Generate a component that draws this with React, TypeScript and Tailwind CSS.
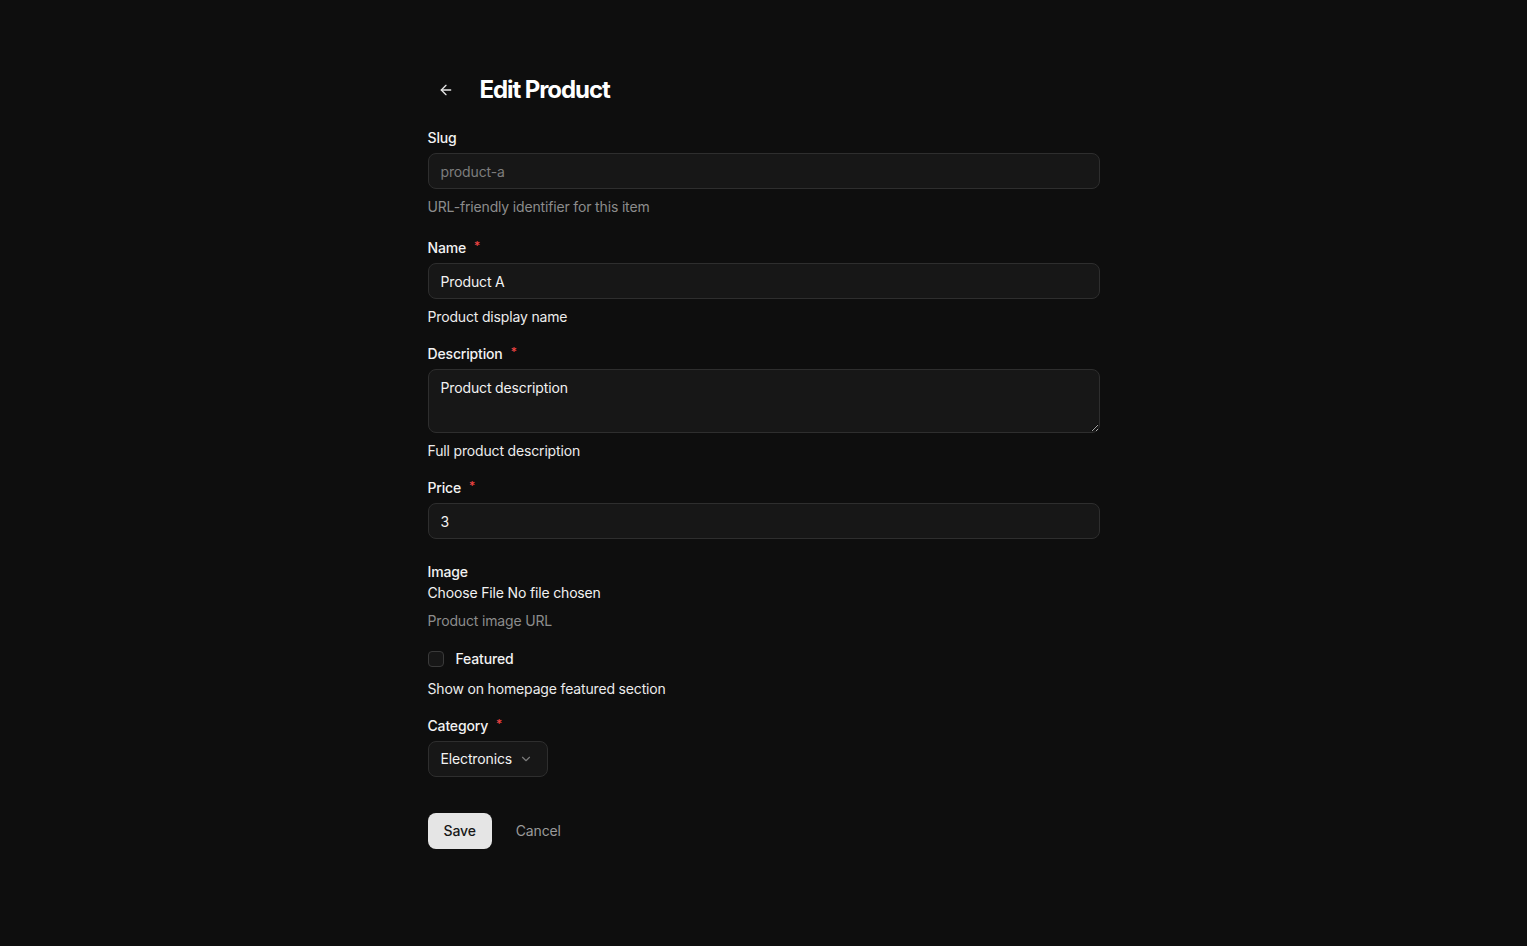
import { ArrowLeft, ChevronDown } from 'lucide-react';

function Label({ text, required }: { text: string; required?: boolean }) {
  return (
    <div className="flex h-5 items-center text-sm font-medium leading-5 text-[#f2f2f2]">
      <span>{text}</span>
      {required && <span className="ml-2 -mt-1 text-xs text-[#ef4444]">*</span>}
    </div>
  );
}

const inputClass =
  'h-9 w-full rounded-lg border border-[#2e2e2e] bg-[#171717] px-3 text-sm tracking-[-0.01em] outline-none';

export default function App() {
  return (
    <div
      className="min-h-[946px] bg-[#0e0e0e] text-[#f2f2f2] tracking-[-0.01em]"
      style={{ fontFamily: 'Inter, "Noto Sans", sans-serif' }}
    >
      <div className="mx-auto flex max-w-2xl flex-col pt-[72px] pb-24">
        <div className="flex h-9 items-center gap-4">
          <button className="flex h-9 w-9 items-center justify-center rounded-md text-[#e5e5e5]">
            <ArrowLeft size={16} strokeWidth={2} />
          </button>
          <h1 className="text-2xl font-bold tracking-[-0.045em] text-white">Edit Product</h1>
        </div>

        <div className="mt-5">
          <Label text="Slug" />
        </div>
        <input className={`${inputClass} mt-[5px] text-[#7d7d7d]`} value="product-a" disabled readOnly />
        <p className="mt-2 text-sm leading-5 text-[#8c8c8c]">URL-friendly identifier for this item</p>

        <div className="mt-[21px]">
          <Label text="Name" required />
        </div>
        <input className={`${inputClass} mt-[5px] text-[#f2f2f2]`} defaultValue="Product A" />
        <p className="mt-2 text-sm leading-5 text-[#ececec]">Product display name</p>

        <div className="mt-[17px]">
          <Label text="Description" required />
        </div>
        <textarea
          className="mt-[5px] h-16 w-full rounded-lg border border-[#2e2e2e] bg-[#171717] px-3 py-2 text-sm leading-5 tracking-[-0.01em] text-[#f2f2f2] outline-none"
          defaultValue="Product description"
        />
        <p className="mt-2 text-sm leading-5 text-[#ececec]">Full product description</p>

        <div className="mt-[17px]">
          <Label text="Price" required />
        </div>
        <input className={`${inputClass} mt-[5px] text-[#f2f2f2]`} defaultValue="3" />

        <div className="mt-[23px]">
          <Label text="Image" />
        </div>
        <div className="mt-px text-sm leading-5 text-[#f2f2f2]">
          <span>Choose File</span> <span>No file chosen</span>
        </div>
        <p className="mt-2 text-sm leading-5 text-[#8c8c8c]">Product image URL</p>

        <label className="mt-[18px] flex h-5 items-center gap-3">
          <span className="h-4 w-4 rounded-[4px] border border-[#3a3a3a] bg-[#171717]" />
          <span className="text-sm font-medium text-[#f2f2f2]">Featured</span>
        </label>
        <p className="mt-[10px] text-sm leading-5 text-[#ececec]">Show on homepage featured section</p>

        <div className="mt-[17px]">
          <Label text="Category" required />
        </div>
        <div className="mt-[5px]">
          <button className="flex h-9 items-center gap-[7px] rounded-lg border border-[#2e2e2e] bg-[#171717] pl-3 pr-[14px] text-sm tracking-[-0.01em] text-[#f2f2f2]">
            Electronics
            <ChevronDown size={14} className="text-[#7a7a7a]" />
          </button>
        </div>

        <div className="mt-9 flex items-center gap-6">
          <button className="h-9 rounded-lg bg-[#e5e5e5] px-4 text-sm font-medium tracking-[-0.01em] text-[#171717]">
            Save
          </button>
          <button className="text-sm tracking-[-0.01em] text-[#9a9a9a]">Cancel</button>
        </div>
      </div>
    </div>
  );
}
